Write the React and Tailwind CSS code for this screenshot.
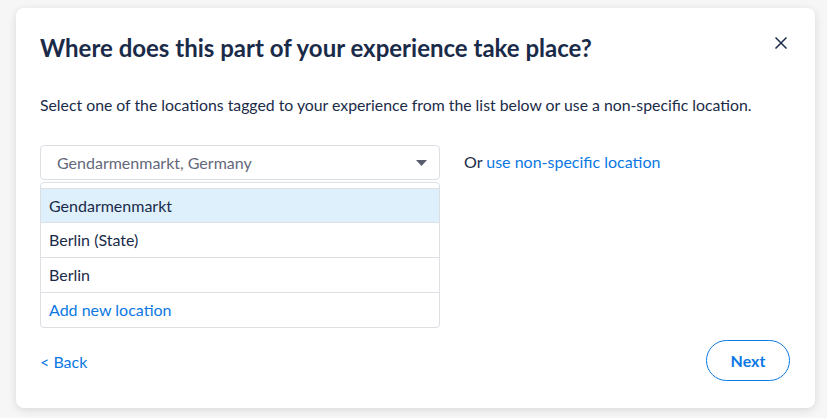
import React from "react";

const options = ["Gendarmenmarkt", "Berlin (State)", "Berlin"];

export default function App() {
    return (
        <div className="w-[827px] h-[418px] bg-[#f6f6f6] pl-4 pr-3 pt-2 pb-[10px] font-['Lato',sans-serif]">
            <div className="h-full rounded-lg bg-white shadow-[0_2px_8px_rgba(0,0,0,0.12)] pl-6 pr-[25px] pt-[24px] flex flex-col">
                {/* Header */}
                <div className="flex items-start justify-between">
                    <h2 className="text-[24px] leading-[32px] font-bold text-[#1a2b49]">
                        Where does this part of your experience take place?
                    </h2>
                    <button className="mt-[5px] mr-[3px] text-[#1a2b49]">
                        <svg width="12" height="12" viewBox="0 0 12 12" fill="none" stroke="currentColor" strokeWidth="1.5">
                            <path d="M0.5 0.5L11.5 11.5M11.5 0.5L0.5 11.5" />
                        </svg>
                    </button>
                </div>

                <p className="mt-[30px] text-[15.8px] leading-[22px] text-[#1a2b49]">
                    Select one of the locations tagged to your experience from the list below or use a non-specific location.
                </p>

                {/* Select + alt */}
                <div className="mt-[29px] flex items-start gap-6">
                    <div className="w-[400px]">
                        <div className="h-[35px] border border-[#dcdfe4] rounded flex items-center justify-between pl-4 pr-3">
                            <span className="text-[16px] text-[#63687a]">Gendarmenmarkt, Germany</span>
                            <svg width="11" height="6" viewBox="0 0 11 6" className="text-[#585d6d]">
                                <path d="M0 0H11L5.5 6Z" fill="currentColor" />
                            </svg>
                        </div>
                        <div className="mt-[2px] border border-[#dcdfe4] rounded pt-[5px]">
                            {options.map((o, i) => (
                                <div
                                    key={o}
                                    className={
                                        "h-[35px] flex items-center px-2 text-[16px] text-[#1a2b49] border-b border-[#dcdfe4] " +
                                        (i === 0 ? "bg-[#dff0fd] border-t" : "")
                                    }
                                >
                                    {o}
                                </div>
                            ))}
                            <div className="h-[34px] flex items-center px-2 text-[16px] text-[#0b78e3]">
                                Add new location
                            </div>
                        </div>
                    </div>
                    <div className="pt-[7px] text-[16px] leading-[20px] text-[#1a2b49]">
                        Or <span className="text-[#0b78e3]">use non-specific location</span>
                    </div>
                </div>

                {/* Footer */}
                <div className="mt-[12px] flex items-center justify-between">
                    <a className="mt-[3px] text-[16px] text-[#0b78e3]">&lt; Back</a>
                    <button className="h-[41px] w-[84px] rounded-full border border-[#0b78e3] text-[16px] font-bold text-[#0b78e3]">
                        Next
                    </button>
                </div>
            </div>
        </div>
    );
}
